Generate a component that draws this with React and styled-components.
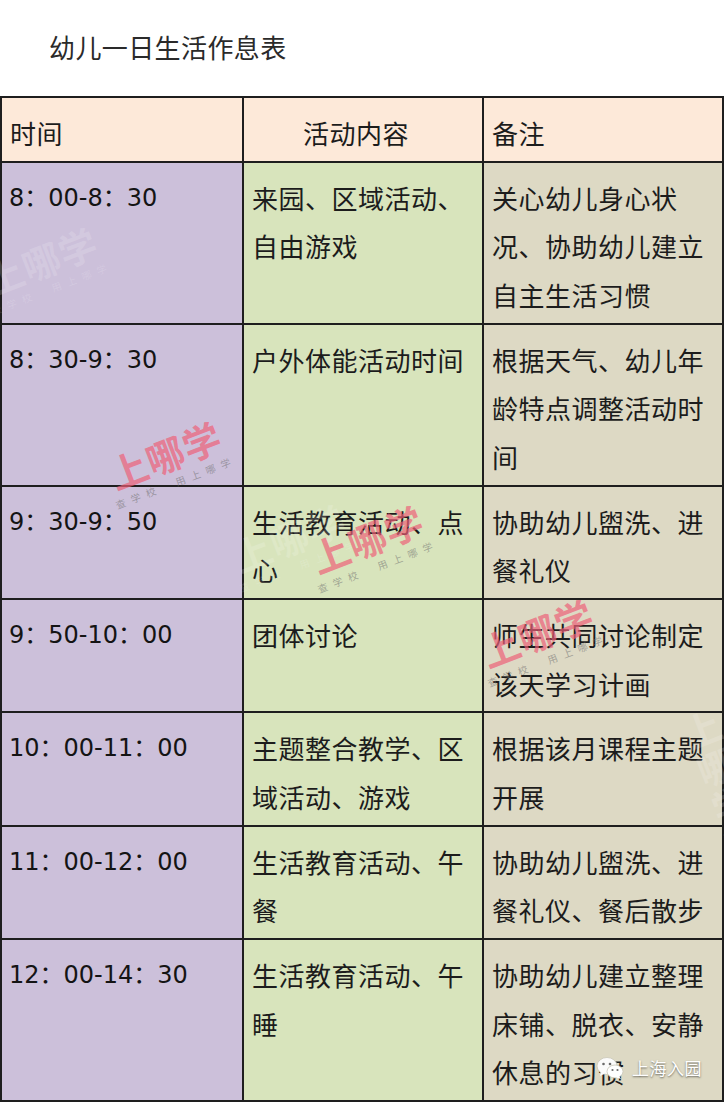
import styled, { createGlobalStyle, css } from 'styled-components'

const GlobalStyle = createGlobalStyle`
    html, body {
        margin: 0;
        padding: 0;
        background: #ffffff;
    }
    body {
        font-family: "Noto Sans CJK SC", "Noto Sans", sans-serif;
        color: #1c1c1c;
    }
`

const rows = [
    { time: '8：00-8：30', act: '来园、区域活动、自由游戏', note: '关心幼儿身心状况、协助幼儿建立自主生活习惯' },
    { time: '8：30-9：30', act: '户外体能活动时间', note: '根据天气、幼儿年龄特点调整活动时间' },
    { time: '9：30-9：50', act: '生活教育活动、点心', note: '协助幼儿盥洗、进餐礼仪' },
    { time: '9：50-10：00', act: '团体讨论', note: '师生共同讨论制定该天学习计画' },
    { time: '10：00-11：00', act: '主题整合教学、区域活动、游戏', note: '根据该月课程主题开展' },
    { time: '11：00-12：00', act: '生活教育活动、午餐', note: '协助幼儿盥洗、进餐礼仪、餐后散步' },
    { time: '12：00-14：30', act: '生活教育活动、午睡', note: '协助幼儿建立整理床铺、脱衣、安静休息的习惯' },
]

// watermark stamps laid over the table
const marks = [
    { x: 44, y: 268, tone: 'ghost' },
    { x: 168, y: 462, tone: 'pink' },
    { x: 292, y: 545, tone: 'ghost' },
    { x: 370, y: 546, tone: 'pink' },
    { x: 540, y: 640, tone: 'pink' },
    { x: 726, y: 790, tone: 'ghost' },
]

const WeChatIcon = () => (
    <svg width="28" height="24" viewBox="0 0 28 24">
        <ellipse cx="11" cy="10" rx="10" ry="8.5" fill="#fbfbfb" stroke="#c9c6b8" strokeWidth="0.8" />
        <path d="M5 16 L4 20 L9 17.5 Z" fill="#fbfbfb" />
        <circle cx="7.5" cy="8" r="1.3" fill="#6b6b6b" />
        <circle cx="14" cy="8" r="1.3" fill="#6b6b6b" />
        <ellipse cx="19" cy="15.5" rx="8" ry="6.5" fill="#ffffff" stroke="#c9c6b8" strokeWidth="0.8" />
        <path d="M23 20 L25 23 L20 21.5 Z" fill="#ffffff" />
        <circle cx="16.5" cy="14" r="1.1" fill="#6b6b6b" />
        <circle cx="21.5" cy="14" r="1.1" fill="#6b6b6b" />
    </svg>
)

const App = () => {
    return (
        <Page>
            <GlobalStyle />
            <Title>幼儿一日生活作息表</Title>
            <Table>
                <Cell $tone="head">时间</Cell>
                <Cell $tone="head" $center>活动内容</Cell>
                <Cell $tone="head">备注</Cell>
                {rows.map((row) => (
                    <Row key={row.time}>
                        <TimeCell $tone="time">{row.time}</TimeCell>
                        <Cell $tone="act">{row.act}</Cell>
                        <Cell $tone="note">{row.note}</Cell>
                    </Row>
                ))}
            </Table>
            {marks.map((m, i) => (
                <Watermark key={i} $tone={m.tone} style={{ left: m.x, top: m.y }}>
                    <MarkBig>上哪学</MarkBig>
                    <MarkSmall $tone={m.tone}>查学校　用上哪学</MarkSmall>
                </Watermark>
            ))}
            <Badge>
                <WeChatIcon />
                <BadgeText>上海入园</BadgeText>
            </Badge>
        </Page>
    )
}

const tones = {
    head: '#fde9d9',
    time: '#ccc0da',
    act: '#d8e4bc',
    note: '#ddd9c4',
}

const Page = styled.div`
    position: relative;
    width: 725px;
    height: 1102px;
    overflow: hidden;
`

const Title = styled.h1`
    margin: 0;
    height: 96px;
    box-sizing: border-box;
    padding: 22px 0 0 49px;
    font-size: 26px;
    font-weight: 400;
    line-height: 50px;
    letter-spacing: 0.4px;
    color: #2a2a2a;
`

const Table = styled.div`
    display: grid;
    grid-template-columns: 240px 238px 238px;
    gap: 2px;
    padding: 2px;
    width: 724px;
    box-sizing: border-box;
    background: #1e1e1e;
`

const Row = styled.div`
    display: contents;
`

const Cell = styled.div`
    background: ${props => tones[props.$tone]};
    padding: 11px 8px 3px 8px;
    font-size: 26px;
    line-height: 48.65px;
    letter-spacing: 0.5px;
    color: #1c1c1c;
    ${props => props.$center && css`
        text-align: center;
        padding-right: 22px;
    `}
`

const TimeCell = styled(Cell)`
    padding-left: 7px;
    font-family: "DejaVu Sans", "Noto Sans CJK SC", sans-serif;
    font-size: 24px;
    letter-spacing: 0;
    color: #141414;
`

const Watermark = styled.div`
    position: absolute;
    display: flex;
    flex-direction: column;
    align-items: center;
    transform: translate(-50%, -50%) rotate(-21deg);
    pointer-events: none;
    ${props => props.$tone === 'pink' ? css`
        color: rgba(238, 96, 120, 0.7);
    ` : css`
        color: rgba(255, 255, 255, 0.16);
    `}
`

const MarkBig = styled.div`
    font-size: 38px;
    font-weight: 700;
    line-height: 40px;
    letter-spacing: 1px;
`

const MarkSmall = styled.div`
    margin-top: 4px;
    font-size: 10px;
    line-height: 12px;
    letter-spacing: 6px;
    color: ${props => props.$tone === 'pink' ? 'rgba(110, 110, 110, 0.55)' : 'rgba(255, 255, 255, 0.16)'};
`

const Badge = styled.div`
    position: absolute;
    left: 596px;
    top: 1055px;
    display: flex;
    align-items: center;
    gap: 8px;
`

const BadgeText = styled.span`
    font-size: 17px;
    color: #ffffff;
    text-shadow: 0 1px 2px rgba(0, 0, 0, 0.55);
    letter-spacing: 0.5px;
`

export default App
